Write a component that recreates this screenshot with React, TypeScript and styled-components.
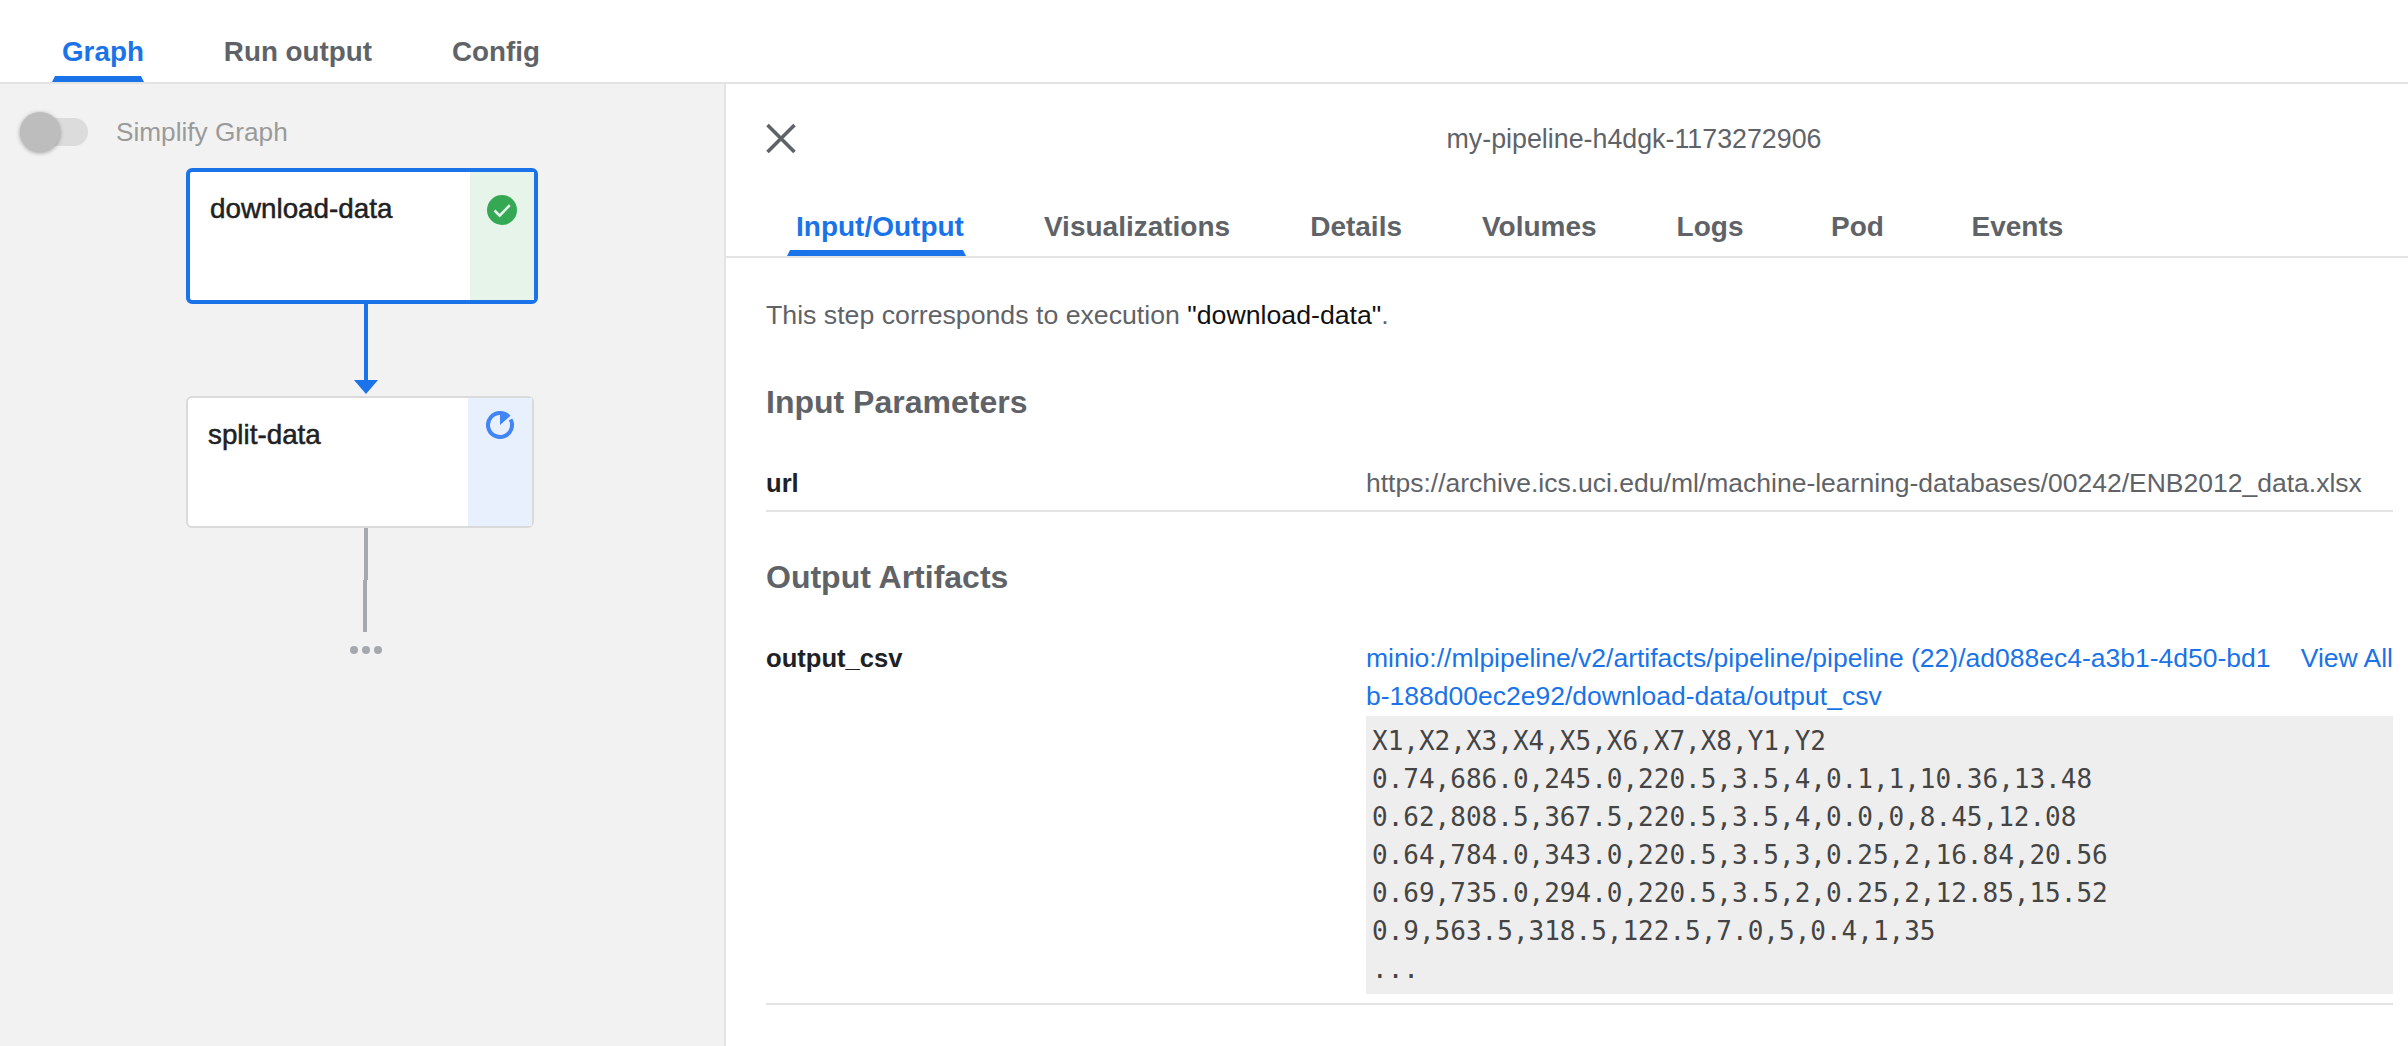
import styled, { createGlobalStyle } from "styled-components";

const GlobalStyle = createGlobalStyle`
  html, body {
    margin: 0;
    padding: 0;
    background: #fff;
    font-family: "Liberation Sans", Arial, sans-serif;
  }
`;

const Page = styled.div`
  width: 2408px;
  height: 1046px;
  display: flex;
  flex-direction: column;
  overflow: hidden;
`;

const TopBar = styled.div`
  height: 82px;
  flex: none;
  display: flex;
  gap: 80px;
  padding-left: 62px;
  border-bottom: 2px solid #e3e3e3;
`;

const Tab = styled.div<{ $active?: boolean }>`
  position: relative;
  font-size: 27.8px;
  font-weight: 700;
  line-height: 34px;
  padding-top: 35px;
  color: ${(p) => (p.$active ? "#1a73e8" : "#5f6368")};
`;

const Underline = styled.span<{ $left: number; $width: number }>`
  position: absolute;
  bottom: 0;
  left: ${(p) => p.$left}px;
  width: ${(p) => p.$width}px;
  height: 6px;
  background: #1a73e8;
  clip-path: polygon(3px 0, calc(100% - 3px) 0, 100% 100%, 0 100%);
`;

const Main = styled.div`
  flex: 1;
  display: flex;
  min-height: 0;
`;

const GraphPane = styled.div`
  position: relative;
  width: 724px;
  flex: none;
  background: #f2f2f2;
  border-right: 2px solid #e3e3e3;
`;

const SwitchRow = styled.div`
  display: flex;
  align-items: center;
  height: 40px;
  padding: 28px 0 0 20px;
`;

const SwitchTrack = styled.div`
  position: relative;
  width: 68px;
  height: 28px;
  border-radius: 14px;
  background: #dcdcdc;
`;

const SwitchThumb = styled.span`
  position: absolute;
  top: -6px;
  left: 0;
  width: 40px;
  height: 40px;
  border-radius: 50%;
  background: #bdbdbd;
  box-shadow: 0 1px 4px rgba(0, 0, 0, 0.35);
`;

const SwitchLabel = styled.span`
  margin-left: 28px;
  font-size: 26.2px;
  color: #9a9a9a;
`;

const Node = styled.div<{ $top: number; $width: number; $height: number; $selected?: boolean }>`
  position: absolute;
  box-sizing: border-box;
  left: 186px;
  top: ${(p) => p.$top}px;
  width: ${(p) => p.$width}px;
  height: ${(p) => p.$height}px;
  display: flex;
  background: #fff;
  border: ${(p) => (p.$selected ? "4px solid #1a73e8" : "2px solid #dadada")};
  border-radius: 6px;
`;

const NodeLabel = styled.div`
  flex: 1;
  padding: 18px 0 0 20px;
  font-size: 27.8px;
  line-height: 38px;
  color: #202124;
  -webkit-text-stroke: 0.5px #202124;
`;

const NodeStatus = styled.div<{ $bg: string; $pad: number }>`
  width: 64px;
  flex: none;
  display: flex;
  justify-content: center;
  align-items: flex-start;
  box-sizing: border-box;
  padding-top: ${(p) => p.$pad}px;
  background: ${(p) => p.$bg};
`;

const EdgeLayer = styled.svg`
  position: absolute;
  left: 340px;
  top: 220px;
`;

const DetailPane = styled.div`
  flex: 1;
  min-width: 0;
  display: flex;
  flex-direction: column;
`;

const TitleRow = styled.div`
  height: 108px;
  flex: none;
  display: flex;
  align-items: center;
  padding-left: 40px;
`;

const CloseIcon = styled.svg`
  width: 30px;
  height: 30px;
  flex: none;
`;

const Title = styled.div`
  flex: 1;
  padding: 2px 0 0 64px;
  text-align: center;
  font-size: 26.8px;
  color: #5f6368;
`;

const DetailTabs = styled.div`
  height: 64px;
  flex: none;
  display: flex;
  gap: 80px;
  padding-left: 70px;
  border-bottom: 2px solid #e3e3e3;
`;

const DetailTab = styled.div<{ $active?: boolean; $minWidth?: number }>`
  position: relative;
  min-width: ${(p) => p.$minWidth ?? 0}px;
  text-align: center;
  font-size: 28px;
  font-weight: 700;
  line-height: 44px;
  padding-top: 13px;
  color: ${(p) => (p.$active ? "#1a73e8" : "#5f6368")};
`;

const Content = styled.div`
  padding: 38px 15px 0 40px;
`;

const Intro = styled.div`
  font-size: 26.7px;
  line-height: 38px;
  color: #5f6368;
`;

const Quoted = styled.span`
  color: #111;
`;

const SectionTitle = styled.div<{ $top: number }>`
  margin-top: ${(p) => p.$top}px;
  font-size: 32px;
  font-weight: 700;
  line-height: 40px;
  color: #5f6368;
`;

const Row = styled.div<{ $pad: number }>`
  margin-top: 42px;
  display: flex;
  padding-bottom: ${(p) => p.$pad}px;
  border-bottom: 2px solid #e3e3e3;
`;

const RowLabel = styled.div`
  width: 600px;
  flex: none;
  font-size: 25.6px;
  font-weight: 700;
  line-height: 38px;
  color: #202124;
`;

const RowValue = styled.div`
  flex: 1;
  min-width: 0;
  font-size: 26.5px;
  line-height: 38px;
  color: #5f6368;
`;

const LinkRow = styled.div`
  display: flex;
  justify-content: space-between;
`;

const ArtifactLink = styled.a`
  width: 912px;
  word-break: break-all;
  color: #1a73e8;
`;

const ViewAll = styled.a`
  flex: none;
  color: #1a73e8;
`;

const Preview = styled.pre`
  margin: 1px 0 0;
  padding: 6px;
  background: #eee;
  font-family: "DejaVu Sans Mono", monospace;
  font-size: 26px;
  line-height: 38px;
  color: #444;
`;

const topTabs = ["Graph", "Run output", "Config"];
const detailTabs = ["Input/Output", "Visualizations", "Details", "Volumes", "Logs", "Pod", "Events"];

const previewText = `X1,X2,X3,X4,X5,X6,X7,X8,Y1,Y2
0.74,686.0,245.0,220.5,3.5,4,0.1,1,10.36,13.48
0.62,808.5,367.5,220.5,3.5,4,0.0,0,8.45,12.08
0.64,784.0,343.0,220.5,3.5,3,0.25,2,16.84,20.56
0.69,735.0,294.0,220.5,3.5,2,0.25,2,12.85,15.52
0.9,563.5,318.5,122.5,7.0,5,0.4,1,35
...`;

function CheckIcon() {
  return (
    <svg width="30" height="30" viewBox="0 0 30 30">
      <circle cx="15" cy="15" r="15" fill="#34a853" />
      <path d="M7.5 15.5l5.2 5.2L22.8 10.2" fill="none" stroke="#e6f4ea" strokeWidth="2.6" />
    </svg>
  );
}

function RunningIcon() {
  return (
    <svg width="28" height="28" viewBox="0 0 28 28">
      <path d="M14 2A12 12 0 1 0 24.6 8.4" fill="none" stroke="#4285f4" strokeWidth="4" />
      <path d="M14 14L14 0L15.5 0A14 14 0 0 1 24.5 4.8Z" fill="#4285f4" />
    </svg>
  );
}

export default function App() {
  return (
    <Page>
      <GlobalStyle />
      <TopBar>
        {topTabs.map((t, i) => (
          <Tab key={t} $active={i === 0}>
            {t}
            {i === 0 && <Underline $left={-10} $width={92} />}
          </Tab>
        ))}
      </TopBar>
      <Main>
        <GraphPane>
          <SwitchRow>
            <SwitchTrack>
              <SwitchThumb />
            </SwitchTrack>
            <SwitchLabel>Simplify Graph</SwitchLabel>
          </SwitchRow>
          <Node $top={84} $width={352} $height={136} $selected>
            <NodeLabel>download-data</NodeLabel>
            <NodeStatus $bg="#e6f4ea" $pad={23}>
              <CheckIcon />
            </NodeStatus>
          </Node>
          <EdgeLayer width="60" height="370" viewBox="0 0 60 370">
            <path d="M26 0V78" stroke="#1a73e8" strokeWidth="4" fill="none" />
            <path d="M14 76H38L26 90Z" fill="#1a73e8" />
            <path d="M26 224V276" stroke="#a5a8ad" strokeWidth="4" fill="none" />
            <path d="M25 276V328" stroke="#a5a8ad" strokeWidth="4" fill="none" />
            <circle cx="14" cy="346" r="4" fill="#a5a8ad" />
            <circle cx="26" cy="346" r="4" fill="#a5a8ad" />
            <circle cx="38" cy="346" r="4" fill="#a5a8ad" />
          </EdgeLayer>
          <Node $top={312} $width={348} $height={132}>
            <NodeLabel>split-data</NodeLabel>
            <NodeStatus $bg="#e8f0fe" $pad={13}>
              <RunningIcon />
            </NodeStatus>
          </Node>
        </GraphPane>
        <DetailPane>
          <TitleRow>
            <CloseIcon viewBox="0 0 30 30">
              <path d="M1.5 2L28.5 29M28.5 2L1.5 29" stroke="#5f6368" strokeWidth="3.6" fill="none" />
            </CloseIcon>
            <Title>my-pipeline-h4dgk-1173272906</Title>
          </TitleRow>
          <DetailTabs>
            {detailTabs.map((t, i) => (
              <DetailTab key={t} $active={i === 0} $minWidth={t === "Pod" ? 68 : 0}>
                {t}
                {i === 0 && <Underline $left={-9} $width={179} />}
              </DetailTab>
            ))}
          </DetailTabs>
          <Content>
            <Intro>
              This step corresponds to execution <Quoted>"download-data"</Quoted>.
            </Intro>
            <SectionTitle $top={48}>Input Parameters</SectionTitle>
            <Row $pad={8}>
              <RowLabel>url</RowLabel>
              <RowValue>https://archive.ics.uci.edu/ml/machine-learning-databases/00242/ENB2012_data.xlsx</RowValue>
            </Row>
            <SectionTitle $top={45}>Output Artifacts</SectionTitle>
            <Row $pad={9}>
              <RowLabel>output_csv</RowLabel>
              <RowValue>
                <LinkRow>
                  <ArtifactLink>
                    minio://mlpipeline/v2/artifacts/pipeline/pipeline (22)/ad088ec4-a3b1-4d50-bd1b-188d00ec2e92/download-data/output_csv
                  </ArtifactLink>
                  <ViewAll>View All</ViewAll>
                </LinkRow>
                <Preview>{previewText}</Preview>
              </RowValue>
            </Row>
          </Content>
        </DetailPane>
      </Main>
    </Page>
  );
}
